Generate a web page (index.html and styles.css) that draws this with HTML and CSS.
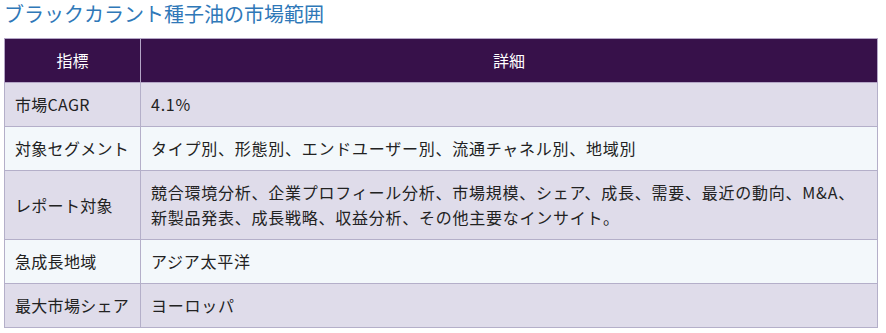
FILE: index.html
```html
<!DOCTYPE html>
<html lang="ja">
<head>
<meta charset="utf-8">
<link rel="stylesheet" href="styles.css">
</head>
<body>
<h2 class="title">ブラックカラント種子油の市場範囲</h2>
<table class="scope">
  <colgroup><col class="c1"><col class="c2"></colgroup>
  <thead>
    <tr><th>指標</th><th>詳細</th></tr>
  </thead>
  <tbody>
    <tr class="odd"><td>市場CAGR</td><td class="detail">4.1%</td></tr>
    <tr class="even"><td>対象セグメント</td><td class="detail">タイプ別、形態別、エンドユーザー別、流通チャネル別、地域別</td></tr>
    <tr class="odd"><td>レポート対象</td><td class="detail">競合環境分析、企業プロフィール分析、市場規模、シェア、成長、需要、最近の動向、M&amp;A、<br>新製品発表、成長戦略、収益分析、その他主要なインサイト。</td></tr>
    <tr class="even"><td>急成長地域</td><td class="detail">アジア太平洋</td></tr>
    <tr class="odd"><td>最大市場シェア</td><td class="detail">ヨーロッパ</td></tr>
  </tbody>
</table>
</body>
</html>
```
FILE: styles.css
```css
html, body {
  margin: 0;
  padding: 0;
  background: #ffffff;
}
body {
  padding: 1px 4px 0;
  font-family: "Noto Sans CJK JP", "Noto Sans", sans-serif;
  color: #222222;
}
.title {
  margin: 0;
  font-size: 20px;
  line-height: 26px;
  font-weight: normal;
  color: #2f78b8;
}
.scope {
  margin-top: 11px;
  width: 874px;
  border-collapse: collapse;
  table-layout: fixed;
  font-size: 16px;
  line-height: 25px;
}
.c1 { width: 136px; }
.scope th, .scope td {
  border: 1px solid #b4afc9;
  padding: 9px 10px;
  text-align: left;
  vertical-align: middle;
}
.scope td {
  letter-spacing: 0.3px;
}
.scope td.detail {
  letter-spacing: 0.75px;
}
.scope th {
  background: #37114a;
  color: #ffffff;
  font-weight: normal;
  text-align: center;
  border-color: #b4a6c6;
}
.scope .odd td { background: #dfdcea; }
.scope .even td { background: #f3f8fb; }
```
